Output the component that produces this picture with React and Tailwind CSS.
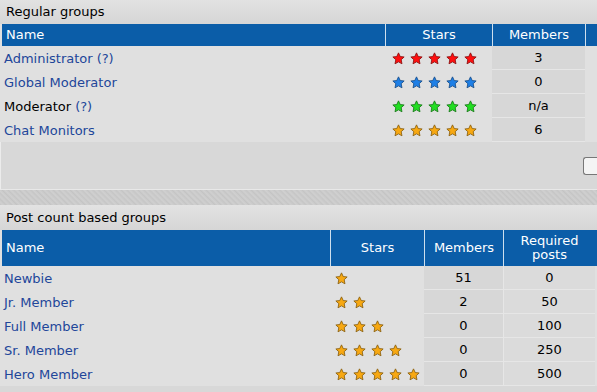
import React from 'react';

const STAR_COLORS = {
  red: ['#ff0f0f', '#8a1010'],
  blue: ['#1e7fe6', '#1a4f8a'],
  green: ['#22dd22', '#1a7a1a'],
  orange: ['#f7a812', '#8a6010'],
};

function Star({ color }) {
  const [fill, stroke] = STAR_COLORS[color];
  return (
    <svg width="13" height="13" viewBox="0 0 12 12" className="shrink-0">
      <polygon
        points="6,0.8 7.6,4.2 11.2,4.6 8.5,7.1 9.2,10.9 6,9.1 2.8,10.9 3.5,7.1 0.8,4.6 4.4,4.2"
        fill={fill}
        stroke={stroke}
        strokeWidth="0.8"
        strokeLinejoin="round"
      />
    </svg>
  );
}

function Stars({ count, color, indent }) {
  return (
    <div className={`flex gap-[5px] ${indent}`}>
      {Array.from({ length: count }).map((_, i) => (
        <Star key={i} color={color} />
      ))}
    </div>
  );
}

const regular = [
  { name: 'Administrator', help: true, color: 'red', members: '3', link: true },
  { name: 'Global Moderator', color: 'blue', members: '0', link: true },
  { name: 'Moderator', help: true, color: 'green', members: 'n/a', link: false },
  { name: 'Chat Monitors', color: 'orange', members: '6', link: true },
];

const postBased = [
  { name: 'Newbie', stars: 1, members: '51', posts: '0' },
  { name: 'Jr. Member', stars: 2, members: '2', posts: '50' },
  { name: 'Full Member', stars: 3, members: '0', posts: '100' },
  { name: 'Sr. Member', stars: 4, members: '0', posts: '250' },
  { name: 'Hero Member', stars: 5, members: '0', posts: '500' },
];

export default function App() {
  return (
    <div
      className="w-[597px] h-[392px] overflow-hidden bg-[#e0e0e0] text-[13px] text-black"
      style={{ fontFamily: '"DejaVu Sans", Verdana, sans-serif' }}
    >
      {/* Regular groups */}
      <div className="h-[24px] flex items-center px-[6px] bg-gradient-to-b from-[#e2e2e2] to-[#d6d6d6]">
        Regular groups
      </div>
      <div className="pl-[2px]">
        <div className="grid grid-cols-[383px_107px_93px_1fr] h-[22px] bg-[#0b5da8] text-white">
          <div className="flex items-center pl-[4px]">Name</div>
          <div className="flex items-center justify-center border-l border-white/80">Stars</div>
          <div className="flex items-center justify-center border-l border-white/80">Members</div>
          <div className="border-l border-white/80"></div>
        </div>
        {regular.map((g) => (
          <div key={g.name} className="grid grid-cols-[383px_107px_93px_1fr] h-[24px]">
            <div className="flex items-center pl-[2px] pt-[1px]">
              <span className={g.link ? 'text-[#22469a]' : 'text-black'}>{g.name}</span>
              {g.help && <span className="ml-[4px] text-[#22469a]">(?)</span>}
            </div>
            <div className="flex items-center">
              <Stars count={5} color={g.color} indent="pl-[7px]" />
            </div>
            <div className="flex items-center justify-center pt-[1px] bg-[#d7d7d7] border-b border-[#e6e6e6]">
              {g.members}
            </div>
            <div></div>
          </div>
        ))}
      </div>
      <div className="h-[47px] bg-[#d8d8d8] border-l border-[#ececec] flex items-center justify-end">
        <div className="w-[14px] h-[18px] rounded-l-[3px] border border-r-0 border-[#777] bg-[#f4f4f4]"></div>
      </div>
      <div className="h-[16px] bg-[repeating-linear-gradient(45deg,#c4c4c4_0px,#d0d0d0_2px,#c8c8c8_4px)] border-t border-[#e8e8e8]"></div>

      {/* Post count based groups */}
      <div className="h-[25px] flex items-center px-[6px] bg-gradient-to-b from-[#e2e2e2] to-[#d6d6d6]">
        Post count based groups
      </div>
      <div className="pl-[2px]">
        <div className="grid grid-cols-[328px_94px_79px_92px] h-[36px] bg-[#0b5da8] text-white">
          <div className="flex items-center pl-[4px]">Name</div>
          <div className="flex items-center justify-center border-l border-white/80">Stars</div>
          <div className="flex items-center justify-center border-l border-white/80">Members</div>
          <div className="flex items-center justify-center text-center leading-[14px] border-l border-white/80">
            Required
            <br />
            posts
          </div>
        </div>
        {postBased.map((g) => (
          <div key={g.name} className="grid grid-cols-[328px_94px_79px_92px] h-[24px]">
            <div className="flex items-center pl-[2px] pt-[1px] text-[#22469a]">{g.name}</div>
            <div className="flex items-center">
              <Stars count={g.stars} color="orange" indent="pl-[5px]" />
            </div>
            <div className="flex items-center justify-center pt-[1px] bg-[#d7d7d7] border-b border-[#e6e6e6]">
              {g.members}
            </div>
            <div className="flex items-center justify-center pt-[1px] bg-[#dbdbdb] border-b border-l border-[#e6e6e6]">
              {g.posts}
            </div>
          </div>
        ))}
      </div>
      <div className="h-[8px] bg-[#d8d8d8]"></div>
    </div>
  );
}
